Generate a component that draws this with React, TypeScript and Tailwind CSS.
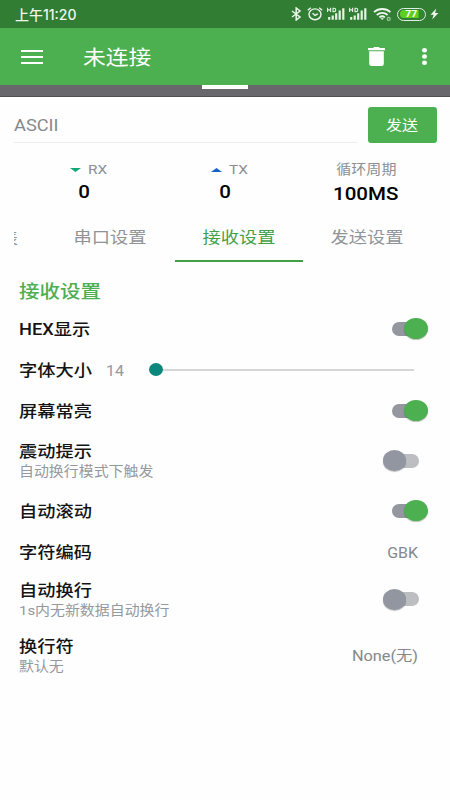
import type { ReactNode } from 'react'
import clsx from 'clsx'

// Every label is set slightly wide
function Wide({ children, className, from = 'left' }: { children: ReactNode; className?: string; from?: 'left' | 'center' | 'right' }) {
  return (
    <span
      className={clsx(
        'inline-block scale-x-[1.14] whitespace-nowrap',
        from === 'left' && 'origin-left',
        from === 'center' && 'origin-center',
        from === 'right' && 'origin-right',
        className,
      )}
    >
      {children}
    </span>
  )
}

function Signal() {
  return (
    <svg width="19" height="14" viewBox="0 0 19 14" fill="none" stroke="#e4f3e4">
      <path d="M.6.7v4.4M3.6.7v4.4M.6 2.9h3M6 1.2h1.1c2.2 0 2.2 3.4 0 3.4H6z" strokeWidth="1.1" />
      <path d="M2.2 12.8V10M5.7 12.8V8.4M9.2 12.8V6.2M12.7 12.8V3.6M16.3 12.8V1.2" strokeWidth="2.2" />
    </svg>
  )
}

function StatusBar() {
  return (
    <div className="flex h-7 items-center bg-[#317d34] pl-[15px] text-[#edf7ed]">
      <span className="font-[Inter,'Noto_Sans_CJK_SC',sans-serif] text-[14px] font-medium whitespace-nowrap">上午11:20</span>
      <div className="ml-auto flex items-center pr-[11px]">
        <svg width="11" height="14" viewBox="0 0 11 14" fill="none" stroke="#edf7ed" strokeWidth="1.5">
          <path d="M1 4l8 6-3.8 3V1L9 4l-8 6" />
        </svg>
        <svg className="ml-[5px]" width="16" height="14" viewBox="0 0 16 14" fill="none" stroke="#edf7ed" strokeWidth="1.4">
          <ellipse cx="8" cy="7.3" rx="6" ry="5.4" />
          <path d="M5.6 6.2L8 8.4l2.8-1.6M.8 3.2L3.8.8M15.2 3.2L12.2.8" />
        </svg>
        <div className="ml-1 flex gap-[3px]">
          <Signal />
          <Signal />
        </div>
        <svg className="ml-[5px]" width="19" height="14" viewBox="0 0 19 14" fill="none" stroke="#edf7ed" strokeWidth="1.8">
          <path d="M1 5.2c4.5-4.3 12-4.3 16.4 0M3.8 8c3.2-2.8 7.8-2.8 10.8 0M6.4 10.4c1.8-1.4 3.8-1.4 5.5 0" />
          <path d="M7.4 11.2L9.2 13l1.8-1.8z" fill="#edf7ed" stroke="none" />
          <circle cx="15.7" cy="11.9" r="1.5" stroke="#9ccc9e" strokeWidth="1.2" />
        </svg>
        <div className="ml-[5px] flex h-[13px] w-[29px] items-center rounded-full border-[1.5px] border-[#e0f0e0] p-[1.5px]">
          <div className="flex h-full w-full items-center justify-center rounded-full bg-linear-to-r from-[#5dcf1c] from-75% to-[#2f8b2a] to-80%">
            <Wide from="center" className="text-[9px] leading-none font-bold text-white">77</Wide>
          </div>
        </div>
        <svg className="ml-1" width="9" height="12" viewBox="0 0 9 12" fill="#edf7ed">
          <path d="M6.3.5L.5 6.8h3.1l-1.4 4.7 6.2-6.4H5.1z" />
        </svg>
      </div>
    </div>
  )
}

function AppBar() {
  return (
    <header className="flex h-[57px] items-center bg-[#4caf50] text-white">
      <svg className="ml-[21px]" width="22" height="14" viewBox="0 0 22 14" fill="#fff">
        <path d="M0 0h22v2H0zM0 6h22v2H0zM0 12h22v2H0z" />
      </svg>
      <Wide className="ml-10 pt-0.5 text-xl">未连接</Wide>
      <svg className="ml-auto" width="17" height="19" viewBox="0 0 17 19" fill="#fff">
        <path d="M0 1h5.2L6 0h5l.8 1H17v2.3H0zM1.2 4.3h14.6V17q0 2-2.2 2H3.4q-2.2 0-2.2-2z" />
      </svg>
      <svg className="mr-[23px] ml-[37px]" width="5" height="17" viewBox="0 0 5 17" fill="#fff">
        <ellipse cx="2.5" cy="2.3" rx="2.5" ry="2.2" />
        <ellipse cx="2.5" cy="8.5" rx="2.5" ry="2.2" />
        <ellipse cx="2.5" cy="14.7" rx="2.5" ry="2.2" />
      </svg>
    </header>
  )
}

function Stat({ label, value, arrow }: { label: string; value: string; arrow?: 'down' | 'up' }) {
  return (
    <div className="flex w-[141px] flex-col items-center">
      <div className={clsx('flex h-5 items-center text-[13.2px] text-[#8b8e93]', arrow && 'gap-[7px] pl-1.5')}>
        {arrow && (
          <svg width="11" height="4" viewBox="0 0 11 4" fill={arrow === 'down' ? '#12a678' : '#1565c8'}>
            <path d={arrow === 'down' ? 'M0 0h11L5.5 4z' : 'M0 4h11L5.5 0z'} />
          </svg>
        )}
        <Wide from={arrow ? 'left' : 'center'} className={arrow && 'pb-0.5 text-[13.5px]'}>{label}</Wide>
      </div>
      <Wide from="center" className={clsx('text-lg leading-6 font-medium text-black', !arrow && 'pt-0.5')}>{value}</Wide>
    </div>
  )
}

function Tab({ label, active }: { label: string; active?: boolean }) {
  return (
    <div
      className={clsx(
        'flex w-[128.5px] items-center justify-center border-b-2 pt-0.5 text-base',
        active ? 'border-[#43a047] text-[#43a047]' : 'border-transparent text-[#909398]',
      )}
    >
      <Wide from="center">{label}</Wide>
    </div>
  )
}

function Switch({ on }: { on?: boolean }) {
  return (
    <div className={clsx('relative mr-[31.5px] h-3.5 w-[27px] rounded-full', on ? 'bg-[#9496a0]' : 'bg-[#bcbec1]')}>
      <span
        className={clsx(
          'absolute -top-[3.5px] h-[21px] w-[23.5px] rounded-[50%] shadow-[0_1px_1px_rgba(0,0,0,0.25)]',
          on ? 'left-[12.5px] bg-[#4caf50]' : '-left-[9px] bg-[#9296a1]',
        )}
      />
    </div>
  )
}

function Row({ label, hint, className, children }: { label: string; hint?: string; className?: string; children: ReactNode }) {
  return (
    <div className={clsx('flex items-center justify-between pl-[18.5px]', className ?? 'h-[41px]')}>
      <div className={clsx('flex flex-col items-start', hint ? 'pt-[3px]' : 'pt-0.5')}>
        <Wide className="text-base leading-5 font-medium text-[#141414]">{label}</Wide>
        {hint && <Wide className="text-[13.1px] leading-5 text-[#95989d]">{hint}</Wide>}
      </div>
      {children}
    </div>
  )
}

export default function App() {
  return (
    <div className="h-[800px] w-[450px] overflow-hidden bg-[#fefefe] font-[Roboto,'Noto_Sans_CJK_SC',sans-serif]">
      <StatusBar />
      <AppBar />
      <div className="flex h-3 justify-center border-b border-[#4f4f52] bg-[#68686c]">
        <div className="h-1 w-[46px] bg-white" />
      </div>

      <div className="flex h-[58px] items-start gap-[9.5px] pt-2.5 pl-3.5">
        <div className="flex h-9 w-[344px] items-center border-b border-[#ededed] pt-[3px] text-base text-[#85888c]">
          <Wide>ASCII</Wide>
        </div>
        <button className="flex h-9 w-[69px] items-center justify-center rounded-[3px] bg-[#4caf50] text-sm text-white">
          <Wide from="center">发送</Wide>
        </button>
      </div>

      <div className="flex h-[58px] pt-[5px] pl-[13.5px]">
        <Stat label="RX" value="0" arrow="down" />
        <Stat label="TX" value="0" arrow="up" />
        <Stat label="循环周期" value="100MS" />
      </div>

      <div className="flex h-[49px]">
        <div className="mr-7 ml-3.5 flex w-1 items-center justify-end overflow-hidden pt-0.5 text-base text-[#909398]">
          <Wide from="right">表</Wide>
        </div>
        <Tab label="串口设置" />
        <Tab label="接收设置" active />
        <Tab label="发送设置" />
      </div>

      <div className="flex h-[46px] items-center pt-3.5 pl-[18.5px]">
        <Wide className="text-lg font-medium text-[#4caf50]">接收设置</Wide>
      </div>
      <Row label="HEX显示">
        <Switch on />
      </Row>
      <div className="flex h-[41px] items-center pl-[18.5px]">
        <Wide className="pt-0.5 text-base leading-5 font-medium text-[#141414]">字体大小</Wide>
        <Wide className="ml-[23px] pt-0.5 text-sm text-[#95989d]">14</Wide>
        <div className="ml-7 flex w-[265px] items-center">
          <span className="h-[13px] w-3.5 rounded-[50%] bg-[#0b887b]" />
          <span className="h-0.5 flex-1 bg-[#d6d6d6]" />
        </div>
      </div>
      <Row label="屏幕常亮">
        <Switch on />
      </Row>
      <Row label="震动提示" hint="自动换行模式下触发" className="h-[59px]">
        <Switch />
      </Row>
      <Row label="自动滚动">
        <Switch on />
      </Row>
      <Row label="字符编码">
        <Wide from="right" className="mr-8 pt-0.5 text-sm text-[#85888c]">GBK</Wide>
      </Row>
      <Row label="自动换行" hint="1s内无新数据自动换行" className="h-[54px]">
        <Switch />
      </Row>
      <Row label="换行符" hint="默认无" className="h-[59px]">
        <Wide from="right" className="mr-8 pt-0.5 text-[14.3px] text-[#85888c]">None(无)</Wide>
      </Row>
    </div>
  )
}
